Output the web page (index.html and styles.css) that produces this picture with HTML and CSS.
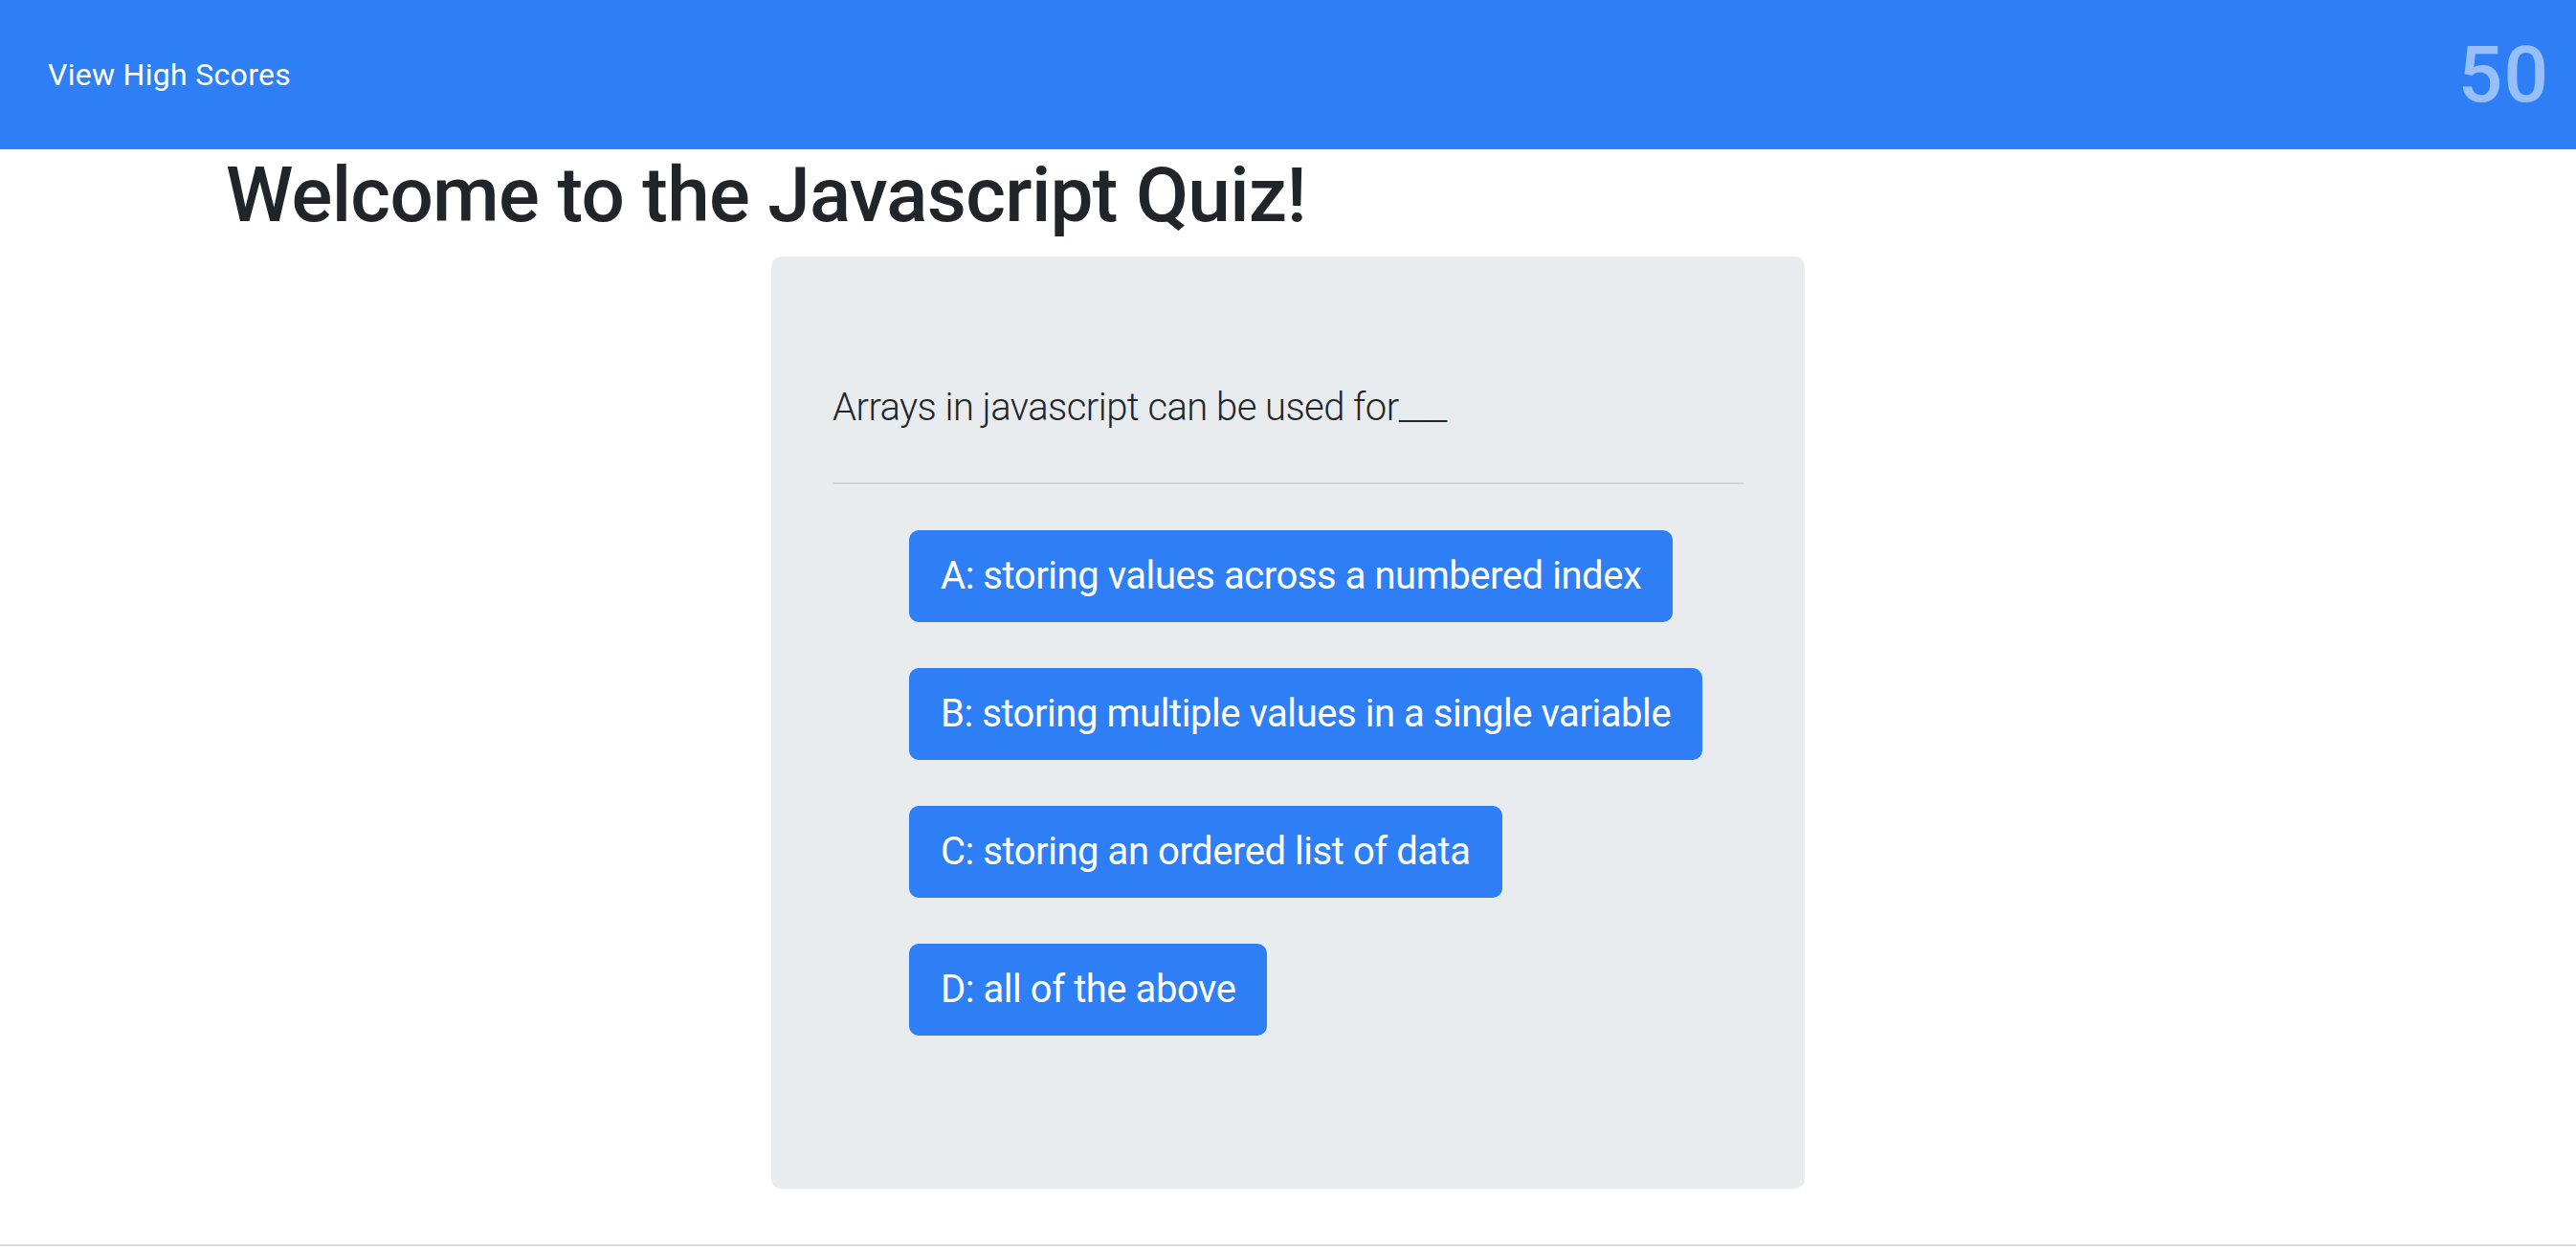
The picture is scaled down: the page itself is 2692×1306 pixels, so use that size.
FILE: index.html
```html
<!DOCTYPE html>
<html lang="en">
<head>
<meta charset="utf-8">
<title>Javascript Quiz</title>
<link rel="stylesheet" href="styles.css">
</head>
<body>
<nav class="navbar">
  <a class="nav-link" href="#">View High Scores</a>
  <span class="timer">50</span>
</nav>
<main class="container">
  <h1 class="title">Welcome to the Javascript Quiz!</h1>
  <div class="quiz-row">
    <section class="quiz-card">
      <p class="question">Arrays in javascript can be used for___</p>
      <hr class="divider">
      <ul class="answers">
        <li><button class="answer-btn">A: storing values across a numbered index</button></li>
        <li><button class="answer-btn">B: storing multiple values in a single variable</button></li>
        <li><button class="answer-btn">C: storing an ordered list of data</button></li>
        <li><button class="answer-btn">D: all of the above</button></li>
      </ul>
    </section>
  </div>
</main>
<footer class="page-footer"></footer>
</body>
</html>
```

FILE: styles.css
```css
html, body {
  margin: 0;
  padding: 0;
  background: #ffffff;
}

body {
  font-family: Roboto, "Liberation Sans", Arial, sans-serif;
  color: #212529;
  height: 1306px;
  overflow: hidden;
  display: flex;
  flex-direction: column;
}

.navbar {
  height: 156px;
  flex: 0 0 156px;
  background: #2e7ff6;
  display: flex;
  align-items: center;
  justify-content: space-between;
  padding: 0 28px 0 50px;
  box-sizing: border-box;
}

.nav-link {
  color: #ffffff;
  text-decoration: none;
  font-size: 32px;
  letter-spacing: 0.3px;
  line-height: 48px;
}

.timer {
  color: rgba(255, 255, 255, 0.5);
  font-size: 82px;
  font-weight: 500;
  letter-spacing: 1px;
  line-height: 96px;
}

.container {
  width: 2280px;
  box-sizing: border-box;
  padding: 0 30px;
  margin: 0 auto;
  flex: 1 1 auto;
}

.title {
  margin: 0 0 16px;
  font-size: 80px;
  font-weight: 500;
  line-height: 96px;
  letter-spacing: -0.7px;
  color: #212529;
}

.quiz-row {
  display: flex;
  justify-content: center;
}

.quiz-card {
  width: 1080px;
  box-sizing: border-box;
  background: #e9ecef;
  border-radius: 10px;
  padding: 128px 64px;
}

.question {
  margin: 0;
  font-size: 40px;
  font-weight: 300;
  line-height: 60px;
  letter-spacing: -0.55px;
}

.divider {
  margin: 48px 0;
  border: 0;
  border-top: 2px solid rgba(0, 0, 0, 0.1);
  height: 0;
}

.answers {
  list-style: none;
  margin: 0 0 32px;
  padding: 0 0 0 80px;
  display: flex;
  flex-direction: column;
  align-items: flex-start;
  gap: 48px;
}

.answer-btn {
  font-family: inherit;
  font-size: 40px;
  line-height: 60px;
  letter-spacing: -0.45px;
  color: #ffffff;
  background: #2e7ff6;
  border: 2px solid #2e7ff6;
  border-radius: 10px;
  padding: 16px 31px;
  margin: 0;
  white-space: nowrap;
  cursor: pointer;
}

.page-footer {
  flex: 0 0 6px;
  border-top: 2px solid #dcdce2;
  box-sizing: border-box;
}
```
